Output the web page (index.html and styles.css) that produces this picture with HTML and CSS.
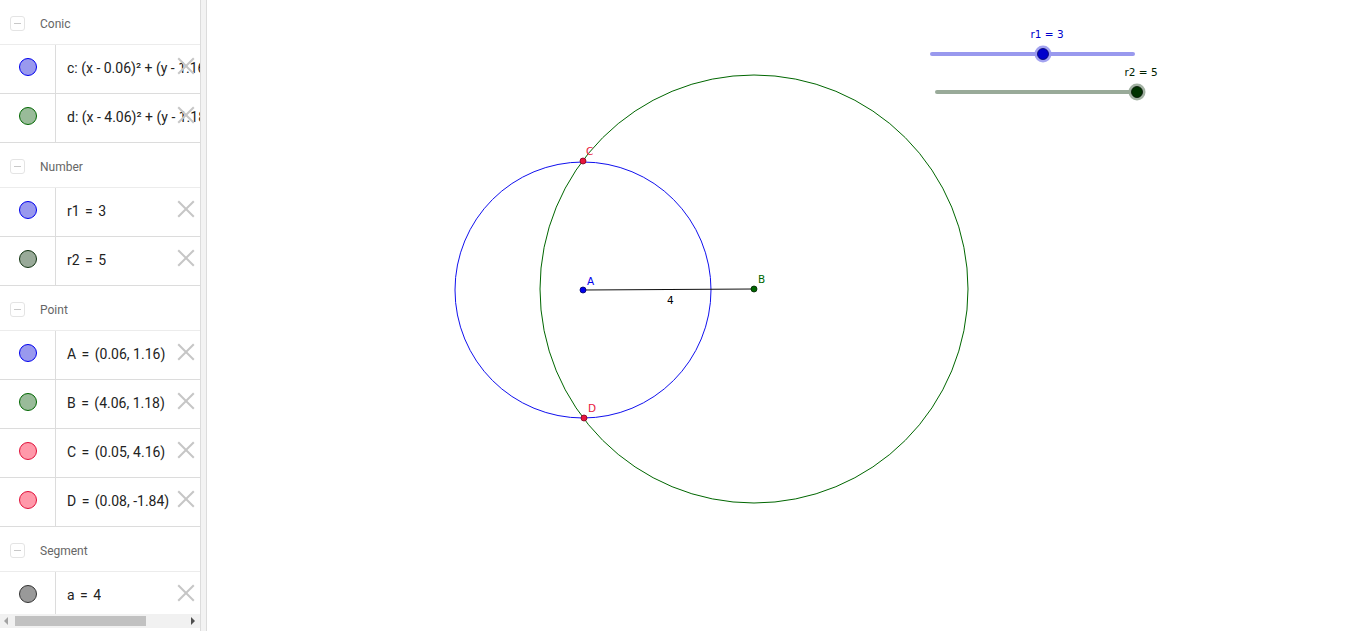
FILE: index.html
```html
<!DOCTYPE html>
<html>
<head>
<meta charset="utf-8">
<link rel="stylesheet" href="styles.css">
</head>
<body>
<div class="app">
  <aside class="algebra">
    <div class="list">
      <div class="group"><span class="toggle"></span><span class="gname">Conic</span></div>
      <div class="row"><div class="marble"><span class="dot dot-c"></span></div><div class="expr">c: (x - 0.06)² + (y - 1.16)² = 9</div><span class="close"></span></div>
      <div class="row"><div class="marble"><span class="dot dot-d"></span></div><div class="expr">d: (x - 4.06)² + (y - 1.18)² = 25</div><span class="close"></span></div>
      <div class="group"><span class="toggle"></span><span class="gname">Number</span></div>
      <div class="row"><div class="marble"><span class="dot dot-c"></span></div><div class="expr">r1 <span class="eq">=</span> 3</div><span class="close"></span></div>
      <div class="row"><div class="marble"><span class="dot dot-r2"></span></div><div class="expr">r2 <span class="eq">=</span> 5</div><span class="close"></span></div>
      <div class="group"><span class="toggle"></span><span class="gname">Point</span></div>
      <div class="row"><div class="marble"><span class="dot dot-c"></span></div><div class="expr">A <span class="eq">=</span> (0.06, 1.16)</div><span class="close"></span></div>
      <div class="row"><div class="marble"><span class="dot dot-d"></span></div><div class="expr">B <span class="eq">=</span> (4.06, 1.18)</div><span class="close"></span></div>
      <div class="row"><div class="marble"><span class="dot dot-red"></span></div><div class="expr">C <span class="eq">=</span> (0.05, 4.16)</div><span class="close"></span></div>
      <div class="row"><div class="marble"><span class="dot dot-red"></span></div><div class="expr">D <span class="eq">=</span> (0.08, -1.84)</div><span class="close"></span></div>
      <div class="group"><span class="toggle"></span><span class="gname">Segment</span></div>
      <div class="row"><div class="marble"><span class="dot dot-gray"></span></div><div class="expr">a <span class="eq">=</span> 4</div><span class="close"></span></div>
    </div>
    <div class="hscroll">
      <span class="arrow-left"></span>
      <span class="thumb"></span>
      <span class="arrow-right"></span>
    </div>
  </aside>
  <div class="splitter"></div>
  <main class="graphics">
    <svg class="canvas" width="1159" height="631" viewBox="207 0 1159 631" xmlns="http://www.w3.org/2000/svg">
      <circle cx="583" cy="290" r="128" fill="none" stroke="#1010ee" stroke-width="1"/>
      <circle cx="754" cy="289" r="214" fill="none" stroke="#006600" stroke-width="1"/>
      <line x1="583" y1="290" x2="754" y2="289" stroke="#111" stroke-width="1.2"/>
      <text x="667" y="304" class="lbl" fill="#000">4</text>
      <circle cx="583" cy="290" r="3" fill="#0000ee" stroke="#000066" stroke-width="0.8"/>
      <circle cx="754" cy="289" r="3" fill="#006600" stroke="#002200" stroke-width="0.8"/>
      <circle cx="583" cy="161" r="3" fill="#e8163c" stroke="#800020" stroke-width="0.8"/>
      <circle cx="584" cy="418" r="3" fill="#e8163c" stroke="#800020" stroke-width="0.8"/>
      <text x="587" y="285" class="lbl" fill="#0000ee">A</text>
      <text x="758" y="283" class="lbl" fill="#006600">B</text>
      <text x="586" y="155" class="lbl" fill="#e8163c">C</text>
      <text x="588" y="412" class="lbl" fill="#e8163c">D</text>

      <text x="1047" y="38" class="lbl" fill="#0000cc" text-anchor="middle">r1 = 3</text>
      <line x1="932" y1="54" x2="1133" y2="54" stroke="#9999ee" stroke-width="4" stroke-linecap="round"/>
      <circle cx="1043" cy="54" r="8.5" fill="#9999ee" opacity="0.9"/>
      <circle cx="1043" cy="54" r="5.5" fill="#0000cc" stroke="#000066" stroke-width="0.8"/>

      <text x="1141" y="76" class="lbl" fill="#002200" text-anchor="middle">r2 = 5</text>
      <line x1="937" y1="92" x2="1137" y2="92" stroke="#99aa99" stroke-width="4" stroke-linecap="round"/>
      <circle cx="1137" cy="92" r="8.5" fill="#99aa99" opacity="0.9"/>
      <circle cx="1137" cy="92" r="5.5" fill="#003300" stroke="#001100" stroke-width="0.8"/>
    </svg>
  </main>
</div>
</body>
</html>
```
FILE: styles.css
```css
html, body {
  margin: 0;
  padding: 0;
  height: 100%;
  background: #ffffff;
  overflow: hidden;
}

.app {
  display: flex;
  width: 1366px;
  height: 631px;
  font-family: Roboto, "Liberation Sans", sans-serif;
}

.algebra {
  width: 200px;
  height: 631px;
  display: flex;
  flex-direction: column;
  overflow: hidden;
  background: #fff;
}

.list {
  flex: 1;
  overflow: hidden;
}

.group {
  height: 44px;
  padding-top: 3px;
  box-sizing: border-box;
  display: flex;
  align-items: center;
  border-bottom: 1px solid #ececec;
  height: 45px;
}

.toggle {
  width: 15px;
  height: 15px;
  margin-left: 10px;
  border: 1px solid #e4e4e4;
  border-radius: 3px;
  position: relative;
  box-sizing: border-box;
}

.toggle::after {
  content: "";
  position: absolute;
  left: 3px;
  right: 3px;
  top: 6px;
  height: 1px;
  background: #c8c8c8;
}

.gname {
  margin-left: 15px;
  font-size: 12px;
  color: #666;
}

.row {
  height: 48px;
  display: flex;
  border-bottom: 1px solid #dcdcdc;
  position: relative;
}

.marble {
  width: 56px;
  flex: none;
  border-right: 1px solid #dcdcdc;
  display: flex;
  align-items: center;
  justify-content: center;
  padding-bottom: 4px;
  box-sizing: border-box;
}

.dot {
  width: 18px;
  height: 18px;
  border-radius: 50%;
  box-sizing: border-box;
  border: 1px solid #0000ee;
  background: #9999ee;
}

.dot-d { background: #99bb99; border-color: #006600; }
.dot-r2 { background: #99aa99; border-color: #113311; }
.dot-red { background: #ff99aa; border-color: #e0103a; }
.dot-gray { background: #999999; border-color: #333333; }

.expr {
  padding-left: 11px;
  padding-bottom: 3px;
  display: flex;
  align-items: center;
  white-space: pre;
  font-size: 14px;
  color: #222;
  overflow: hidden;
}

.eq {
  margin: 0 2px;
}

.close {
  position: absolute;
  right: 6px;
  top: 13px;
  width: 16px;
  height: 16px;
}

.close::before, .close::after {
  content: "";
  position: absolute;
  left: -3px;
  top: 7px;
  width: 22px;
  height: 2px;
  background: #c6c6c6;
  transform: rotate(45deg);
}

.close::after {
  transform: rotate(-45deg);
}

.hscroll {
  height: 14px;
  margin-bottom: 3px;
  background: #f1f1f1;
  display: flex;
  align-items: center;
  position: relative;
  flex: none;
}

.arrow-left {
  width: 0;
  height: 0;
  border-top: 4px solid transparent;
  border-bottom: 4px solid transparent;
  border-right: 4px solid #a3a3a3;
  margin-left: 4px;
}

.thumb {
  width: 131px;
  height: 10px;
  margin-left: 7px;
  background: #c1c1c1;
}

.arrow-right {
  width: 0;
  height: 0;
  border-top: 4px solid transparent;
  border-bottom: 4px solid transparent;
  border-left: 4px solid #505050;
  margin-left: auto;
  margin-right: 5px;
}

.splitter {
  width: 5px;
  flex: none;
  background: #f3f3f3;
  border-left: 1px solid #dcdcdc;
  border-right: 1px solid #dcdcdc;
}

.graphics {
  flex: 1;
  background: #fff;
  overflow: hidden;
}

.canvas {
  display: block;
}

.lbl {
  font-family: "DejaVu Sans", "Liberation Sans", sans-serif;
  font-size: 10.5px;
}
```
